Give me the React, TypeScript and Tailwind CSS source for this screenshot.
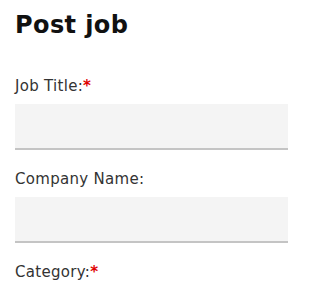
function Field({ label, required }: { label: string; required?: boolean }) {
  return (
    <div className="flex flex-col mb-[19px]">
      <label className="text-[15px] leading-[20px] tracking-[0.3px] text-[#333333]">
        {label}
        {required && <span className="text-[#e00000] font-bold">*</span>}
      </label>
      <div className="mt-[8px] h-[46px] w-full bg-[#f4f4f4] border-b-2 border-[#c4c4c4]" />
    </div>
  );
}

export default function App() {
  return (
    <div
      className="h-[288px] w-[288px] overflow-hidden bg-white pl-[15px]"
      style={{ fontFamily: '"DejaVu Sans", sans-serif' }}
    >
      <h1 className="mt-[11px] mb-[37px] text-[24px] leading-[28px] tracking-[0.4px] font-bold text-[#111111]">
        Post job
      </h1>
      <Field label="Job Title:" required />
      <Field label="Company Name:" />
      <Field label="Category:" required />
    </div>
  );
}
